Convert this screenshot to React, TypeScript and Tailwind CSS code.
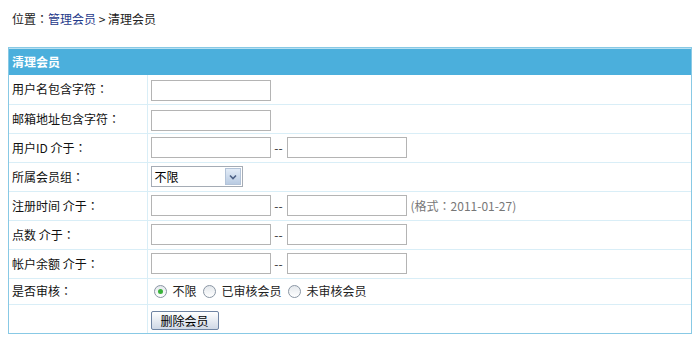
import React from 'react';

const font = { fontFamily: '"Noto Sans CJK SC", "Liberation Sans", sans-serif' };

// fullwidth colon, centred like the original's SimSun rendering
function Colon() {
  return <span style={{ fontFamily: '"Noto Sans CJK TC", sans-serif' }}>：</span>;
}

function TextInput() {
  return (
    <input
      type="text"
      className="h-[21px] w-[120px] border border-[#b4b4b4] bg-white px-1 text-[12px] outline-none"
    />
  );
}

function RangeInputs({ note }: { note?: string }) {
  return (
    <div className="flex items-center">
      <TextInput />
      <span className="w-[16px] text-center text-[12px] leading-none text-[#333]">--</span>
      <TextInput />
      {note && (
        <span className="ml-1 text-[12px] text-[#777]">
          (格式<Colon />2011-01-27)
        </span>
      )}
    </div>
  );
}

function Radio({ checked, label }: { checked?: boolean; label: string }) {
  return (
    <label className="mr-[6px] flex items-center">
      <span className="flex h-[13px] w-[13px] items-center justify-center rounded-full border border-[#8a96a4] bg-gradient-to-b from-[#e4e8ec] to-white">
        {checked && <span className="h-[5px] w-[5px] rounded-full bg-[#3ab23a]" />}
      </span>
      <span className="ml-[6px] text-[12px] text-[#222]">{label}</span>
    </label>
  );
}

const rows: { label: string; field: React.ReactNode }[] = [
  { label: '用户名包含字符', field: <TextInput /> },
  { label: '邮箱地址包含字符', field: <TextInput /> },
  { label: '用户ID 介于', field: <RangeInputs /> },
  {
    label: '所属会员组',
    field: (
      <div className="flex h-[21px] w-[92px] items-center border border-[#a5acb5] bg-white">
        <span className="flex-1 pl-[3px] text-[12px] text-black">不限</span>
        <span className="mr-px flex h-[17px] w-[16px] items-center justify-center border border-[#b3c3d8] bg-gradient-to-b from-[#e3ecf7] to-[#b9cbe2]">
          <svg width="8" height="6" viewBox="0 0 8 6">
            <path d="M1 1.5 L4 4.5 L7 1.5" fill="none" stroke="#4d6185" strokeWidth="1.6" />
          </svg>
        </span>
      </div>
    ),
  },
  { label: '注册时间 介于', field: <RangeInputs note="format" /> },
  { label: '点数 介于', field: <RangeInputs /> },
  { label: '帐户余额 介于', field: <RangeInputs /> },
];

export default function App() {
  return (
    <div className="min-h-screen bg-white px-2 pt-[11px]" style={font}>
      {/* Breadcrumb */}
      <div className="pl-1 text-[12px] leading-[16px] text-[#222]">
        位置<Colon />
        <span className="text-[#1f3a8a]">管理会员</span> &gt; 清理会员
      </div>

      <div className="mt-[20px] w-[684px] border border-[#88c9e5]">
        <div className="flex h-[27px] items-center border-t border-[#b8e0f1] bg-[#4bafdc] pl-[3px] text-[12px] font-bold text-white">
          清理会员
        </div>
        <table className="w-full border-collapse">
          <tbody>
            {rows.map((r) => (
              <tr key={r.label} className="h-[29px] border-b border-[#d9eef7]">
                <td className="w-[138px] border-r border-[#d9eef7] pl-[3px] text-[12px] text-[#111]">
                  {r.label}
                  <Colon />
                </td>
                <td className="pl-[3px]">{r.field}</td>
              </tr>
            ))}
            <tr className="h-[26px] border-b border-[#d9eef7]">
              <td className="border-r border-[#d9eef7] pl-[3px] text-[12px] text-[#111]">
                是否审核<Colon />
              </td>
              <td className="pl-[6px]">
                <div className="flex items-center">
                  <Radio checked label="不限" />
                  <Radio label="已审核会员" />
                  <Radio label="未审核会员" />
                </div>
              </td>
            </tr>
            <tr className="h-[29px]">
              <td className="border-r border-[#d9eef7]" />
              <td className="pl-[3px]">
                <button className="h-[19px] w-[68px] rounded-[2px] border border-[#6f84a3] bg-gradient-to-b from-white to-[#cfd8e6] text-[12px] leading-none text-black">
                  删除会员
                </button>
              </td>
            </tr>
          </tbody>
        </table>
      </div>
    </div>
  );
}
